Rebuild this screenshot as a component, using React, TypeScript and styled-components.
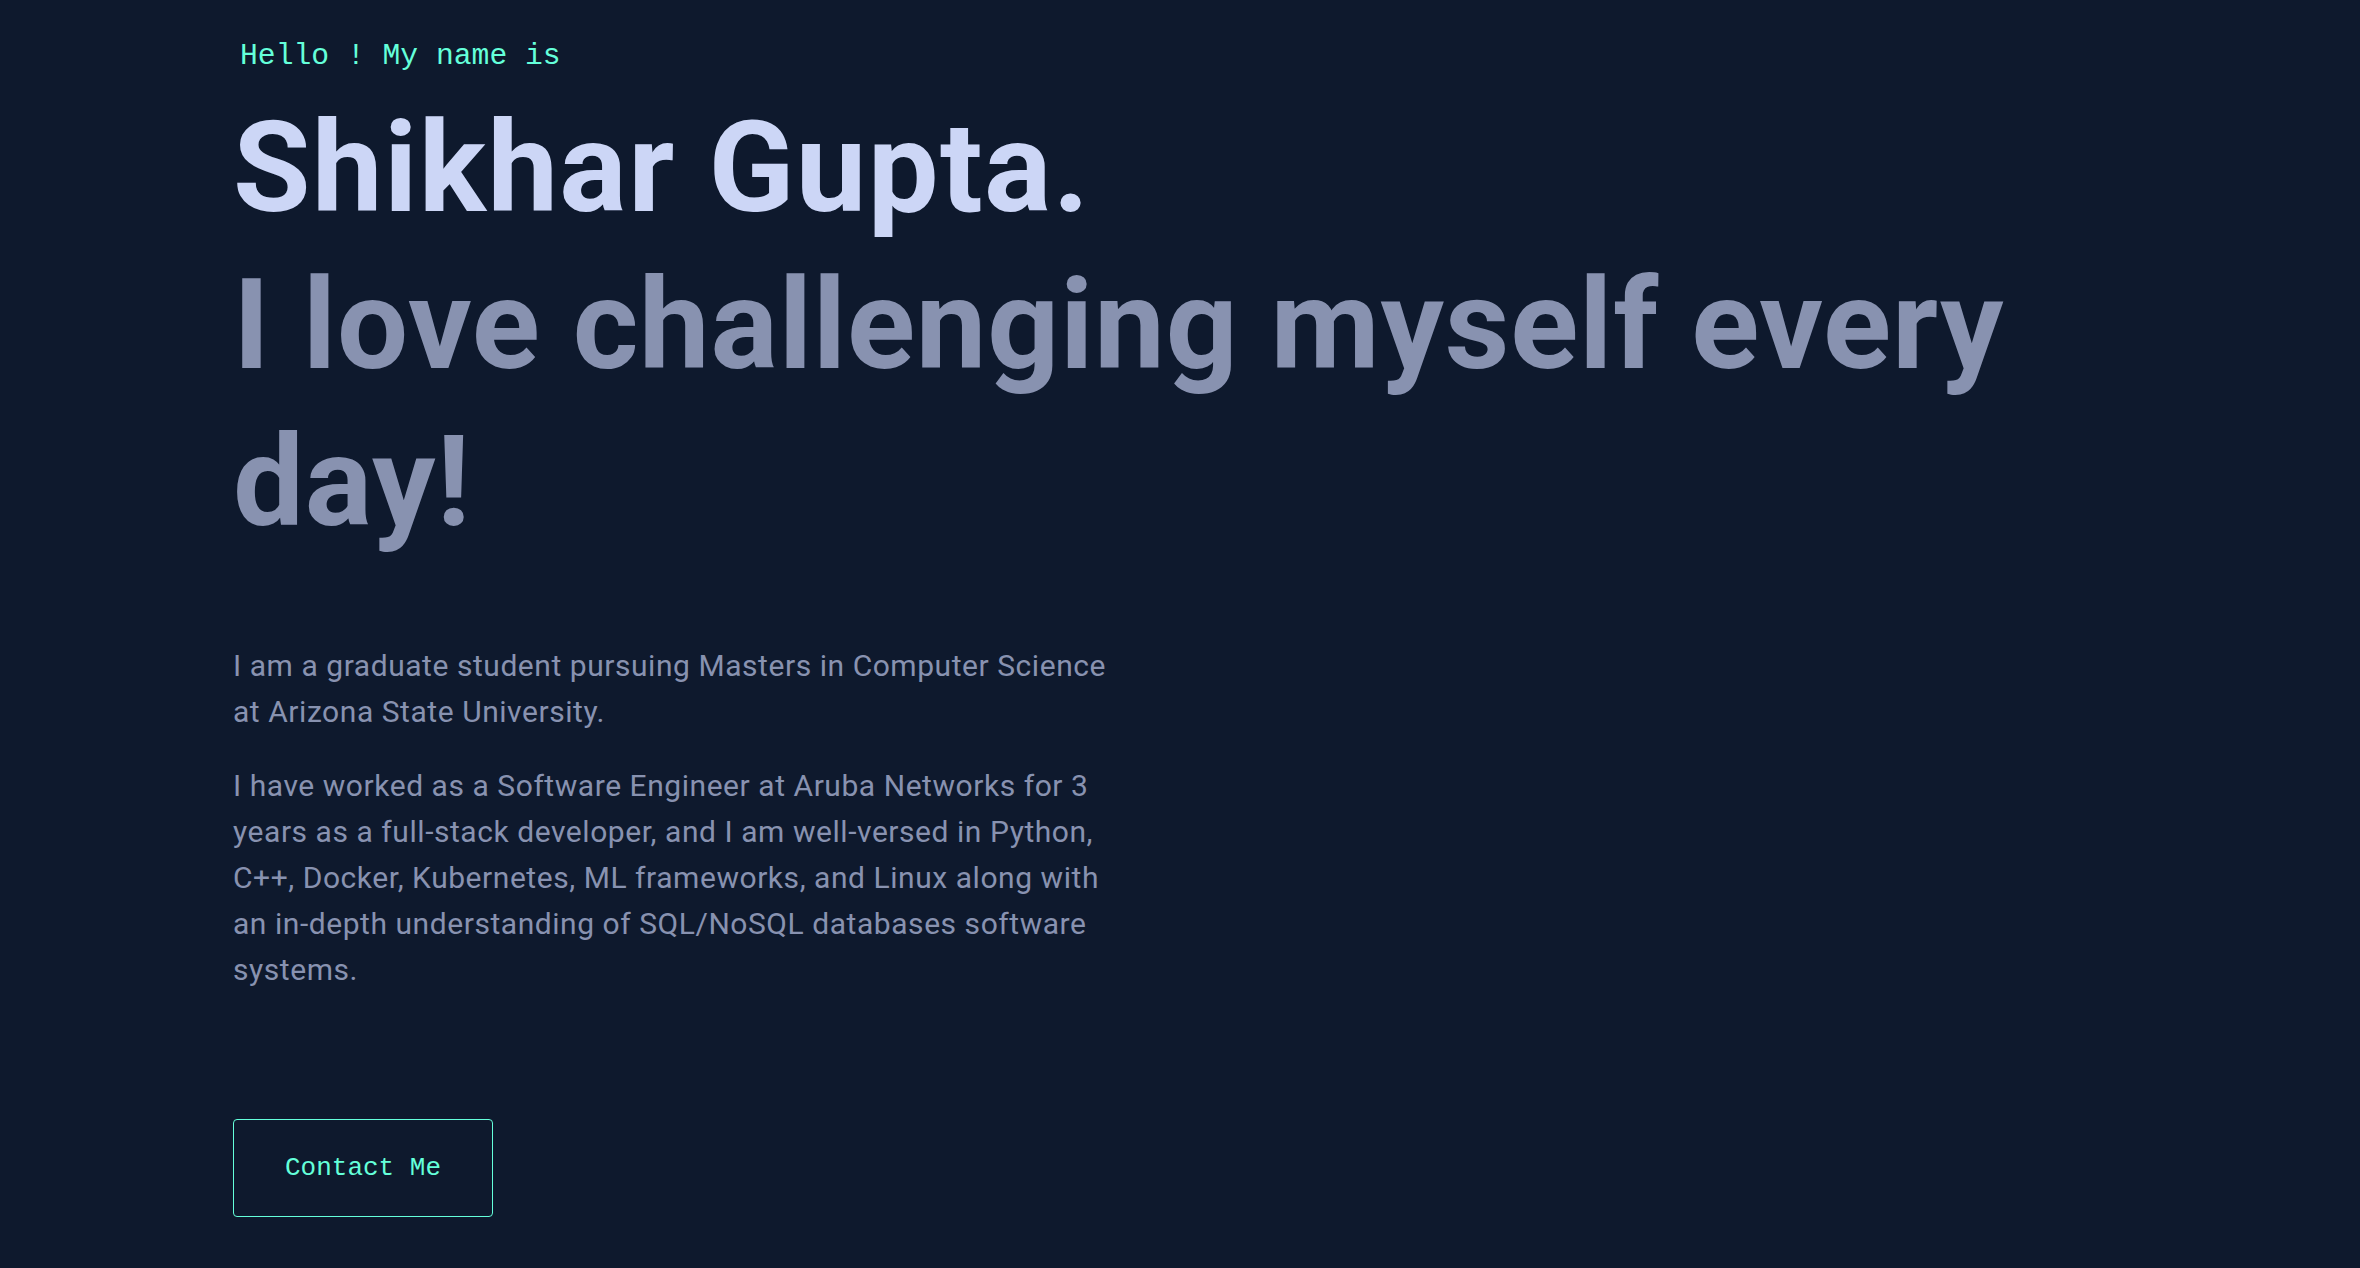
import React from 'react';
import styled, { createGlobalStyle } from 'styled-components';

const colors = {
   navy: '#0e192d',
   lightest: '#ccd6f6',
   slate: '#8892b0',
   green: '#64ffda',
};

const GlobalStyle = createGlobalStyle`
   html, body {
      margin: 0;
      padding: 0;
      background-color: ${colors.navy};
   }
   body {
      font-family: Roboto, 'Liberation Sans', sans-serif;
      -webkit-font-smoothing: antialiased;
   }
   * {
      box-sizing: border-box;
   }
`;

export default function App() {
   return (
      <>
         <GlobalStyle />
         <Hero>
            <Greeting>Hello ! My name is</Greeting>
            <Name>Shikhar Gupta.</Name>
            <Tagline>I love challenging myself every day!</Tagline>
            <About>
               <Text>
                  I am a graduate student pursuing Masters in Computer Science at Arizona State
                  University.
               </Text>
               <Text>
                  I have worked as a Software Engineer at Aruba Networks for 3 years as a
                  full-stack developer, and I am well-versed in Python, C++, Docker, Kubernetes,
                  ML frameworks, and Linux along with an in-depth understanding of SQL/NoSQL
                  databases software systems.
               </Text>
            </About>
            <ContactButton href="#">Contact Me</ContactButton>
         </Hero>
      </>
   );
}

const Hero = styled.section`
   min-height: 1268px;
   padding: 42px 0 0 233px;
   display: flex;
   flex-direction: column;
   align-items: flex-start;
   overflow: hidden;
`;

const Greeting = styled.p`
   margin: 0 0 0 7px;
   font-family: 'Liberation Mono', 'DejaVu Sans Mono', monospace;
   font-size: 29.7px;
   line-height: 29px;
   color: ${colors.green};
`;

const Name = styled.h1`
   margin: 19px 0 0;
   font-size: 126px;
   line-height: 157px;
   font-weight: 700;
   letter-spacing: 1.4px;
   color: ${colors.lightest};
`;

const Tagline = styled.h2`
   margin: 0;
   max-width: 1880px;
   font-size: 126px;
   line-height: 157px;
   font-weight: 700;
   letter-spacing: 0.8px;
   color: ${colors.slate};
`;

const About = styled.div`
   margin-top: 82px;
   max-width: 895px;
   display: flex;
   flex-direction: column;
   gap: 28px;
`;

const Text = styled.p`
   margin: 0;
   font-size: 30px;
   line-height: 46px;
   letter-spacing: 0.55px;
   color: ${colors.slate};
`;

const ContactButton = styled.a`
   margin-top: 126px;
   display: inline-block;
   padding: 35px 51px;
   border: 1px solid ${colors.green};
   border-radius: 4px;
   font-family: 'Liberation Mono', 'DejaVu Sans Mono', monospace;
   font-size: 26px;
   line-height: 26px;
   color: ${colors.green};
   text-decoration: none;
`;
